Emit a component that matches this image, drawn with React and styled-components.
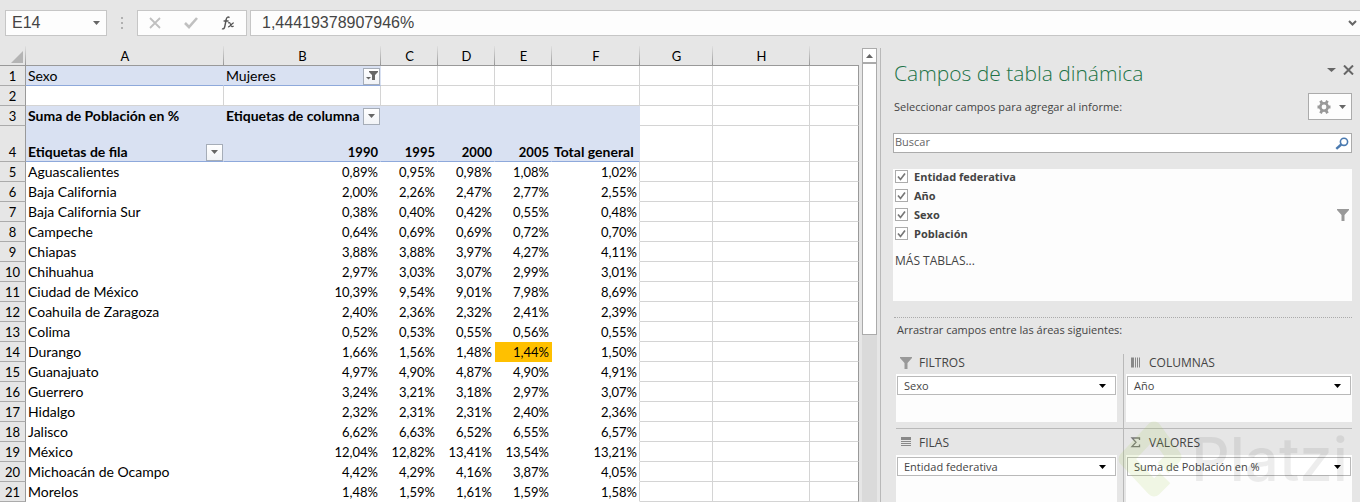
import React, { useState } from "react";
import styled, { createGlobalStyle, css } from "styled-components";

const GlobalStyle = createGlobalStyle`
  * {
    box-sizing: border-box;
  }
  body {
    margin: 0;
    background-color: #e6e6e6;
    color: #444;
    font-family: "Open Sans", "Noto Sans", sans-serif;
    font-size: 12px;
  }
  button,
  input {
    font: inherit;
    color: inherit;
    margin: 0;
    padding: 0;
  }
`;

const columns = [
  { id: "A", width: 198 },
  { id: "B", width: 157 },
  { id: "C", width: 57 },
  { id: "D", width: 57 },
  { id: "E", width: 57 },
  { id: "F", width: 88 },
  { id: "G", width: 73 },
  { id: "H", width: 97 },
];

const states = [
  ["Aguascalientes", "0,89%", "0,95%", "0,98%", "1,08%", "1,02%"],
  ["Baja California", "2,00%", "2,26%", "2,47%", "2,77%", "2,55%"],
  ["Baja California Sur", "0,38%", "0,40%", "0,42%", "0,55%", "0,48%"],
  ["Campeche", "0,64%", "0,69%", "0,69%", "0,72%", "0,70%"],
  ["Chiapas", "3,88%", "3,88%", "3,97%", "4,27%", "4,11%"],
  ["Chihuahua", "2,97%", "3,03%", "3,07%", "2,99%", "3,01%"],
  ["Ciudad de México", "10,39%", "9,54%", "9,01%", "7,98%", "8,69%"],
  ["Coahuila de Zaragoza", "2,40%", "2,36%", "2,32%", "2,41%", "2,39%"],
  ["Colima", "0,52%", "0,53%", "0,55%", "0,56%", "0,55%"],
  ["Durango", "1,66%", "1,56%", "1,48%", "1,44%", "1,50%"],
  ["Guanajuato", "4,97%", "4,90%", "4,87%", "4,90%", "4,91%"],
  ["Guerrero", "3,24%", "3,21%", "3,18%", "2,97%", "3,07%"],
  ["Hidalgo", "2,32%", "2,31%", "2,31%", "2,40%", "2,36%"],
  ["Jalisco", "6,62%", "6,63%", "6,52%", "6,55%", "6,57%"],
  ["México", "12,04%", "12,82%", "13,41%", "13,54%", "13,21%"],
  ["Michoacán de Ocampo", "4,42%", "4,29%", "4,16%", "3,87%", "4,05%"],
  ["Morelos", "1,48%", "1,59%", "1,61%", "1,59%", "1,58%"],
];

const fields = ["Entidad federativa", "Año", "Sexo", "Población"];

const Page = styled.div`
  display: flex;
  flex-direction: column;
  min-height: 100vh;
`;

// Formula bar
const FormulaBar = styled.header`
  display: flex;
  padding: 10px 0;
  color: #444;
  font-family: "Liberation Sans", Arial, sans-serif;
  font-size: 16px;
`;

const Box = styled.div`
  display: flex;
  align-items: center;
  height: 26px;
  background-color: #fdfdfd;
  border: 1px solid #c6c6c6;
`;

const NameBox = styled(Box)`
  width: 102px;
  margin-left: 5px;
  padding: 0 6px;
`;

const BarInput = styled.input`
  flex: 1;
  min-width: 0;
  height: 22px;
  border: none;
  outline: none;
  background: transparent;
`;

const Grip = styled.div`
  display: flex;
  align-items: center;
  justify-content: center;
  width: 30px;
`;

const Tools = styled(Box)`
  justify-content: space-around;
  width: 110px;
  margin-right: 3px;
`;

const FormulaBox = styled(Box)`
  flex: 1;
  padding: 0 3px 0 11px;
  border-right: none;
`;

const IconButton = styled.button`
  display: flex;
  align-items: center;
  justify-content: center;
  border: none;
  background: transparent;
`;

// Sheet
const Body = styled.main`
  display: flex;
  flex: 1;
`;

const Sheet = styled.section`
  flex: 1;
  min-width: 0;
  overflow: hidden;
`;

const Table = styled.table`
  width: 100%;
  table-layout: fixed;
  border-collapse: separate;
  border-spacing: 0;
  color: #000;
  font-family: Lato, sans-serif;
  font-size: 13px;
  line-height: 18px;
`;

const ColHead = styled.th`
  height: 20px;
  padding: 0;
  font-weight: 400;
  background: linear-gradient(#e0e0e0, #999) right / 1px 100% no-repeat #e6e6e6;
  border-bottom: 1px solid #999;

  &:last-child {
    background: #e6e6e6;
  }
`;

const Corner = styled(ColHead)`
  svg {
    display: block;
    margin: 4px 3px 2px auto;
  }
`;

const RowHead = styled.th`
  height: ${(props) => (props.$tall ? 36 : 20)}px;
  padding: 0;
  font-weight: 400;
  vertical-align: bottom;
  background-color: #e6e6e6;
  border-right: 1px solid #999;
  border-bottom: 1px solid #ababab;
`;

const Cell = styled.td`
  padding: 0 2px;
  vertical-align: bottom;
  white-space: nowrap;
  text-align: ${(props) => (props.$right ? "right" : "left")};
  font-size: ${(props) => (props.$right ? 13 : 14)}px;
  font-weight: ${(props) => (props.$bold ? 700 : 400)};
  background-color: #fff;
  border-right: 1px solid #d4d4d4;
  border-bottom: 1px solid #d4d4d4;

  &:last-child {
    border-right-color: #999;
  }

  ${(props) =>
    props.$plain &&
    css`
      border-color: #fff;
    `}

  ${(props) =>
    props.$edge &&
    css`
      border-right-color: #d4d4d4;
    `}

  ${(props) =>
    props.$fill &&
    css`
      background-color: #d9e1f2;
      border-color: #d9e1f2;
    `}

  ${(props) =>
    props.$underline &&
    css`
      border-bottom-color: #8ea9db;
    `}

  ${(props) =>
    props.$selected &&
    css`
      background-color: #ffc000;
      border-color: #ffc000;
    `}
`;

const CellRow = styled.div`
  display: flex;
  align-items: center;
  justify-content: space-between;
  height: 18px;
`;

const FilterButton = styled.button`
  display: flex;
  align-items: center;
  justify-content: center;
  width: 17px;
  height: 17px;
  margin-right: -2px;
  background: linear-gradient(#fff, #f1f3f7);
  border: 1px solid #a6adb8;
`;

const ScrollBar = styled.div`
  width: 15px;
  margin: 2px 3px 0 3px;
  background-color: #dadada;
`;

const ScrollUp = styled(IconButton)`
  width: 15px;
  height: 15px;
  background-color: #fff;
  border: 1px solid #ababab;
`;

const Thumb = styled.div`
  width: 15px;
  height: 272px;
  background-color: #fff;
  border: 1px solid #ababab;
`;

// Fields panel
const Panel = styled.aside`
  display: flex;
  flex-direction: column;
  width: 480px;
  margin-top: 2px;
  padding: 0 8px 0 13px;
  border-left: 1px solid #b9b9b9;
`;

const PanelHeader = styled.div`
  display: flex;
  align-items: center;
  justify-content: space-between;
  height: 45px;
  padding-top: 4px;
`;

const Title = styled.h1`
  margin: 0;
  color: #217346;
  font-size: 21px;
  font-weight: 300;
  line-height: 28px;
`;

const WindowButtons = styled.div`
  display: flex;
  gap: 7px;
  margin-right: -2px;
  padding-bottom: 6px;
`;

const Intro = styled.div`
  display: flex;
  align-items: center;
  justify-content: space-between;
  height: 27px;
  font-size: 11px;
`;

const GearButton = styled(IconButton)`
  gap: 8px;
  width: 44px;
  height: 27px;
  padding-left: 2px;
  background-color: #fdfdfd;
  border: 1px solid #ababab;
`;

const Search = styled.label`
  display: flex;
  align-items: center;
  height: 20px;
  margin-top: 13px;
  margin-left: -1px;
  padding: 0 2px 0 1px;
  background-color: #fff;
  border: 1px solid #ababab;
`;

const SearchInput = styled.input`
  flex: 1;
  height: 18px;
  padding-bottom: 3px;
  border: none;
  outline: none;
  background: transparent;
  font-size: 11px;
  &::placeholder {
    color: #666;
    opacity: 1;
  }
`;

const FieldList = styled.div`
  height: 132px;
  margin-top: 16px;
  margin-left: -1px;
  padding: 0 3px 0 2px;
  background-color: #fdfdfd;
`;

const Field = styled.label`
  display: flex;
  align-items: center;
  gap: 6px;
  height: 19px;
  padding-bottom: 4px;
  font-size: 11px;
  font-weight: 700;

  svg {
    margin-left: auto;
  }
`;

const Check = styled.input`
  appearance: none;
  width: 13px;
  height: 13px;
  border: 1px solid #ababab;
  background-color: #fff;

  &:checked {
    background-image: url("data:image/svg+xml,%3Csvg xmlns='http://www.w3.org/2000/svg' viewBox='0 0 11 11'%3E%3Cpath d='M2 5.5L4.5 8.5L9 2.5' fill='none' stroke='%23777' stroke-width='1.7'/%3E%3C/svg%3E");
  }
`;

const MoreTables = styled.a`
  display: block;
  margin-top: 8px;
  color: #444;
  font-size: 12px;
  line-height: 16px;
  text-decoration: none;
`;

const Divider = styled.hr`
  width: 100%;
  margin: 16px 0 0;
  border: none;
  border-top: 1px dotted #ababab;
`;

const Hint = styled.p`
  margin: 4px 3px 16px;
  font-size: 11px;
  line-height: 16px;
`;

const Areas = styled.div`
  display: grid;
  flex: 1;
  grid-template-columns: 227px 1fr;
  grid-template-rows: 74px 1fr;
  margin-left: 2px;
`;

const Area = styled.section`
  display: flex;
  flex-direction: column;
  padding: ${(props) => (props.$second ? "0 0 0 2px" : "0 6px 0 0")};
  border-left: ${(props) => (props.$second ? "1px solid #b9b9b9" : "none")};
  border-top: ${(props) => (props.$lower ? "1px solid #b9b9b9" : "none")};
  padding-bottom: ${(props) => (props.$lower ? 0 : 6)}px;
`;

const AreaTitle = styled.h2`
  display: flex;
  align-items: center;
  gap: 7px;
  height: ${(props) => (props.$lower ? 26 : 20)}px;
  margin: 0;
  padding: 0 0 ${(props) => (props.$lower ? 0 : 3)}px 4px;
  font-size: 12px;
  font-weight: 400;
`;

const DropZone = styled.div`
  flex: 1;
  padding: 2px 1px;
  background-color: #fdfdfd;
`;

const FieldButton = styled.button`
  display: flex;
  align-items: center;
  justify-content: space-between;
  width: 100%;
  height: 19px;
  padding: 0 9px 0 6px;
  background-color: #fff;
  border: 1px solid #b9b9b9;
  font-size: 11px;
`;

const Watermark = styled.div`
  position: fixed;
  right: 12px;
  bottom: 5px;
  display: flex;
  align-items: center;
  gap: 9px;
  color: rgba(0, 0, 0, 0.07);
  font-family: Inter, sans-serif;
  font-size: 60px;
  font-weight: 500;
  line-height: 76px;
  pointer-events: none;
`;

const Arrow = ({ size = 7, color = "#666", up = false }) => (
  <svg width={size} height={4} viewBox="0 0 8 4" preserveAspectRatio="none">
    <path d={up ? "M0 4L4 0L8 4Z" : "M0 0H8L4 4Z"} fill={color} />
  </svg>
);

const Funnel = ({ color = "#999" }) => (
  <svg width="12" height="12" viewBox="0 0 12 12">
    <path d="M0 0H12V1L7.5 6V12H4.5V6L0 1Z" fill={color} />
  </svg>
);

const FilteredIcon = () => (
  <svg width="12" height="10" viewBox="0 0 12 10">
    <path d="M3 0H12V1L9 4V9H6V4L3 1Z" fill="#666" />
    <path d="M0 6H5L2.5 8.5Z" fill="#666" />
  </svg>
);

const ColumnsIcon = () => (
  <svg width="12" height="11" viewBox="0 0 12 11">
    <path d="M1 0.5H4V10.5H1ZM5 0.5H6V10.5H5ZM7 0.5H8V10.5H7ZM9 0.5H10V10.5H9Z" fill="#888" />
  </svg>
);

const RowsIcon = () => (
  <svg width="12" height="10" viewBox="0 0 12 10">
    <path d="M1 0H11V3H1ZM1 4H11V5H1ZM1 6H11V7H1ZM1 8H11V9H1Z" fill="#888" />
  </svg>
);

const SigmaIcon = () => (
  <svg width="12" height="11" viewBox="0 0 12 11">
    <path d="M9.5 3V1H2L6 5.3L2 9.6H9.5V7.6" fill="none" stroke="#777" strokeWidth="1.3" />
  </svg>
);

const Gear = () => (
  <svg width="14" height="14" viewBox="0 0 14 14">
    <circle cx="7" cy="7" r="3.7" fill="none" stroke="#999" strokeWidth="2.6" />
    <path
      d="M3.5 0.8L5 3.5M10.5 0.8L9 3.5M3.5 13.2L5 10.5M10.5 13.2L9 10.5M0.5 7H3M11 7H13.5"
      stroke="#999"
      strokeWidth="2.8"
    />
  </svg>
);

const SearchIcon = () => (
  <svg width="14" height="13" viewBox="0 0 14 13">
    <circle cx="9" cy="4.8" r="3.6" fill="none" stroke="#4a7ab0" strokeWidth="1.6" />
    <path d="M6.2 7.5L1.3 11.8" stroke="#4a7ab0" strokeWidth="2.4" />
  </svg>
);

function DropArea({ icon, title, field, second, lower }) {
  return (
    <Area $second={second} $lower={lower}>
      <AreaTitle $lower={lower}>
        {icon}
        {title}
      </AreaTitle>
      <DropZone>
        <FieldButton type="button">
          {field}
          <Arrow color="#000" />
        </FieldButton>
      </DropZone>
    </Area>
  );
}

function EmptyCells() {
  return (
    <>
      <Cell />
      <Cell />
      <Cell />
    </>
  );
}

function PivotTable() {
  return (
    <Table>
      <colgroup>
        <col style={{ width: 26 }} />
        {columns.map((col) => (
          <col key={col.id} style={{ width: col.width }} />
        ))}
        <col />
      </colgroup>
      <thead>
        <tr>
          <Corner>
            <svg width="12" height="12" viewBox="0 0 12 12">
              <path d="M12 0V12H0Z" fill="#b4b4b4" />
            </svg>
          </Corner>
          {columns.map((col) => (
            <ColHead key={col.id} scope="col">
              {col.id}
            </ColHead>
          ))}
          <ColHead />
        </tr>
      </thead>
      <tbody>
        <tr>
          <RowHead scope="row">1</RowHead>
          <Cell $fill $underline>
            Sexo
          </Cell>
          <Cell $fill $underline>
            <CellRow>
              Mujeres
              <FilterButton type="button" aria-label="Filtrar Sexo">
                <FilteredIcon />
              </FilterButton>
            </CellRow>
          </Cell>
          <Cell />
          <Cell />
          <Cell />
          <Cell />
          <EmptyCells />
        </tr>
        <tr>
          <RowHead scope="row">2</RowHead>
          {columns.map((col) => (
            <Cell key={col.id} />
          ))}
          <Cell />
        </tr>
        <tr>
          <RowHead scope="row">3</RowHead>
          <Cell $fill $bold>
            Suma de Población en %
          </Cell>
          <Cell $fill $bold>
            <CellRow>
              Etiquetas de columna
              <FilterButton type="button" aria-label="Filtrar columnas">
                <Arrow />
              </FilterButton>
            </CellRow>
          </Cell>
          <Cell $fill />
          <Cell $fill />
          <Cell $fill />
          <Cell $fill />
          <EmptyCells />
        </tr>
        <tr>
          <RowHead scope="row" $tall>
            4
          </RowHead>
          <Cell $fill $bold $underline>
            <CellRow>
              Etiquetas de fila
              <FilterButton type="button" aria-label="Filtrar filas">
                <Arrow />
              </FilterButton>
            </CellRow>
          </Cell>
          {["1990", "1995", "2000", "2005"].map((year) => (
            <Cell key={year} $fill $bold $underline $right>
              {year}
            </Cell>
          ))}
          <Cell $fill $bold $underline>
            Total general
          </Cell>
          <EmptyCells />
        </tr>
        {states.map(([name, ...values], row) => (
          <tr key={name}>
            <RowHead scope="row">{row + 5}</RowHead>
            <Cell $plain>{name}</Cell>
            {values.map((value, i) => (
              <Cell
                key={i}
                $plain
                $right
                $edge={i === values.length - 1}
                $selected={name === "Durango" && i === 3}
              >
                {value}
              </Cell>
            ))}
            <EmptyCells />
          </tr>
        ))}
      </tbody>
    </Table>
  );
}

function FieldsPanel() {
  const [checked, setChecked] = useState(fields);

  const toggle = (field) =>
    setChecked((prev) =>
      prev.includes(field) ? prev.filter((f) => f !== field) : [...prev, field]
    );

  return (
    <Panel>
      <PanelHeader>
        <Title>Campos de tabla dinámica</Title>
        <WindowButtons>
          <IconButton type="button" aria-label="Opciones">
            <Arrow size={9} />
          </IconButton>
          <IconButton type="button" aria-label="Cerrar">
            <svg width="11" height="10" viewBox="0 0 11 10">
              <path d="M1 0.5L10 9.5M10 0.5L1 9.5" stroke="#666" strokeWidth="2" />
            </svg>
          </IconButton>
        </WindowButtons>
      </PanelHeader>
      <Intro>
        Seleccionar campos para agregar al informe:
        <GearButton type="button" aria-label="Herramientas">
          <Gear />
          <Arrow />
        </GearButton>
      </Intro>
      <Search>
        <SearchInput type="text" placeholder="Buscar" aria-label="Buscar" />
        <SearchIcon />
      </Search>
      <FieldList>
        {fields.map((field) => (
          <Field key={field}>
            <Check
              type="checkbox"
              checked={checked.includes(field)}
              onChange={() => toggle(field)}
            />
            {field}
            {field === "Sexo" && <Funnel />}
          </Field>
        ))}
        <MoreTables href="#">MÁS TABLAS...</MoreTables>
      </FieldList>
      <Divider />
      <Hint>Arrastrar campos entre las áreas siguientes:</Hint>
      <Areas>
        <DropArea icon={<Funnel />} title="FILTROS" field="Sexo" />
        <DropArea icon={<ColumnsIcon />} title="COLUMNAS" field="Año" second />
        <DropArea icon={<RowsIcon />} title="FILAS" field="Entidad federativa" lower />
        <DropArea
          icon={<SigmaIcon />}
          title="VALORES"
          field="Suma de Población en %"
          second
          lower
        />
      </Areas>
    </Panel>
  );
}

export default function App() {
  return (
    <Page>
      <GlobalStyle />
      <FormulaBar>
        <NameBox>
          <BarInput aria-label="Cuadro de nombres" defaultValue="E14" />
          <IconButton type="button" aria-label="Nombres">
            <Arrow />
          </IconButton>
        </NameBox>
        <Grip>
          <svg width="2" height="12" viewBox="0 0 2 12">
            <path d="M0 0H2V2H0ZM0 5H2V7H0ZM0 10H2V12H0Z" fill="#b0b0b0" />
          </svg>
        </Grip>
        <Tools>
          <IconButton type="button" aria-label="Cancelar">
            <svg width="12" height="12" viewBox="0 0 12 12">
              <path d="M1 1L11 11M11 1L1 11" stroke="#c0c0c0" strokeWidth="1.8" />
            </svg>
          </IconButton>
          <IconButton type="button" aria-label="Introducir">
            <svg width="14" height="12" viewBox="0 0 14 12">
              <path d="M1 6L5 10L13 1" fill="none" stroke="#c0c0c0" strokeWidth="2.6" />
            </svg>
          </IconButton>
          <IconButton type="button" aria-label="Insertar función">
            <svg width="14" height="14" viewBox="0 0 14 14">
              <path
                d="M8.5 1.6C7 0.4 5.6 1.2 5.2 3.5L3.8 10.5C3.4 12.6 2.4 13.4 1 12.6M2.6 5H7.6"
                fill="none"
                stroke="#555"
                strokeWidth="1.4"
              />
              <path
                d="M7 7C8.6 6 9 7 9.6 8.6C10.2 10.4 11 11.2 12.6 10M12.8 6.8C11 6.6 9 11.4 7 10.8"
                fill="none"
                stroke="#555"
                strokeWidth="1.2"
              />
            </svg>
          </IconButton>
        </Tools>
        <FormulaBox>
          <BarInput aria-label="Barra de fórmulas" defaultValue="1,44419378907946%" />
          <IconButton type="button" aria-label="Expandir">
            <svg width="9" height="6" viewBox="0 0 9 6">
              <path d="M1 1L4.5 4.5L8 1" fill="none" stroke="#666" strokeWidth="2" />
            </svg>
          </IconButton>
        </FormulaBox>
      </FormulaBar>
      <Body>
        <Sheet>
          <PivotTable />
        </Sheet>
        <ScrollBar>
          <ScrollUp type="button" aria-label="Subir">
            <Arrow up />
          </ScrollUp>
          <Thumb />
        </ScrollBar>
        <FieldsPanel />
      </Body>
      <Watermark aria-hidden="true">
        <svg width="64" height="76" viewBox="0 0 64 76">
          <path
            d="M45 47L56 36L36 8L8 38L36 68L47 57"
            fill="none"
            stroke="#98ca3f"
            strokeOpacity="0.13"
            strokeWidth="15"
            strokeLinejoin="round"
          />
        </svg>
        Platzi
      </Watermark>
    </Page>
  );
}
